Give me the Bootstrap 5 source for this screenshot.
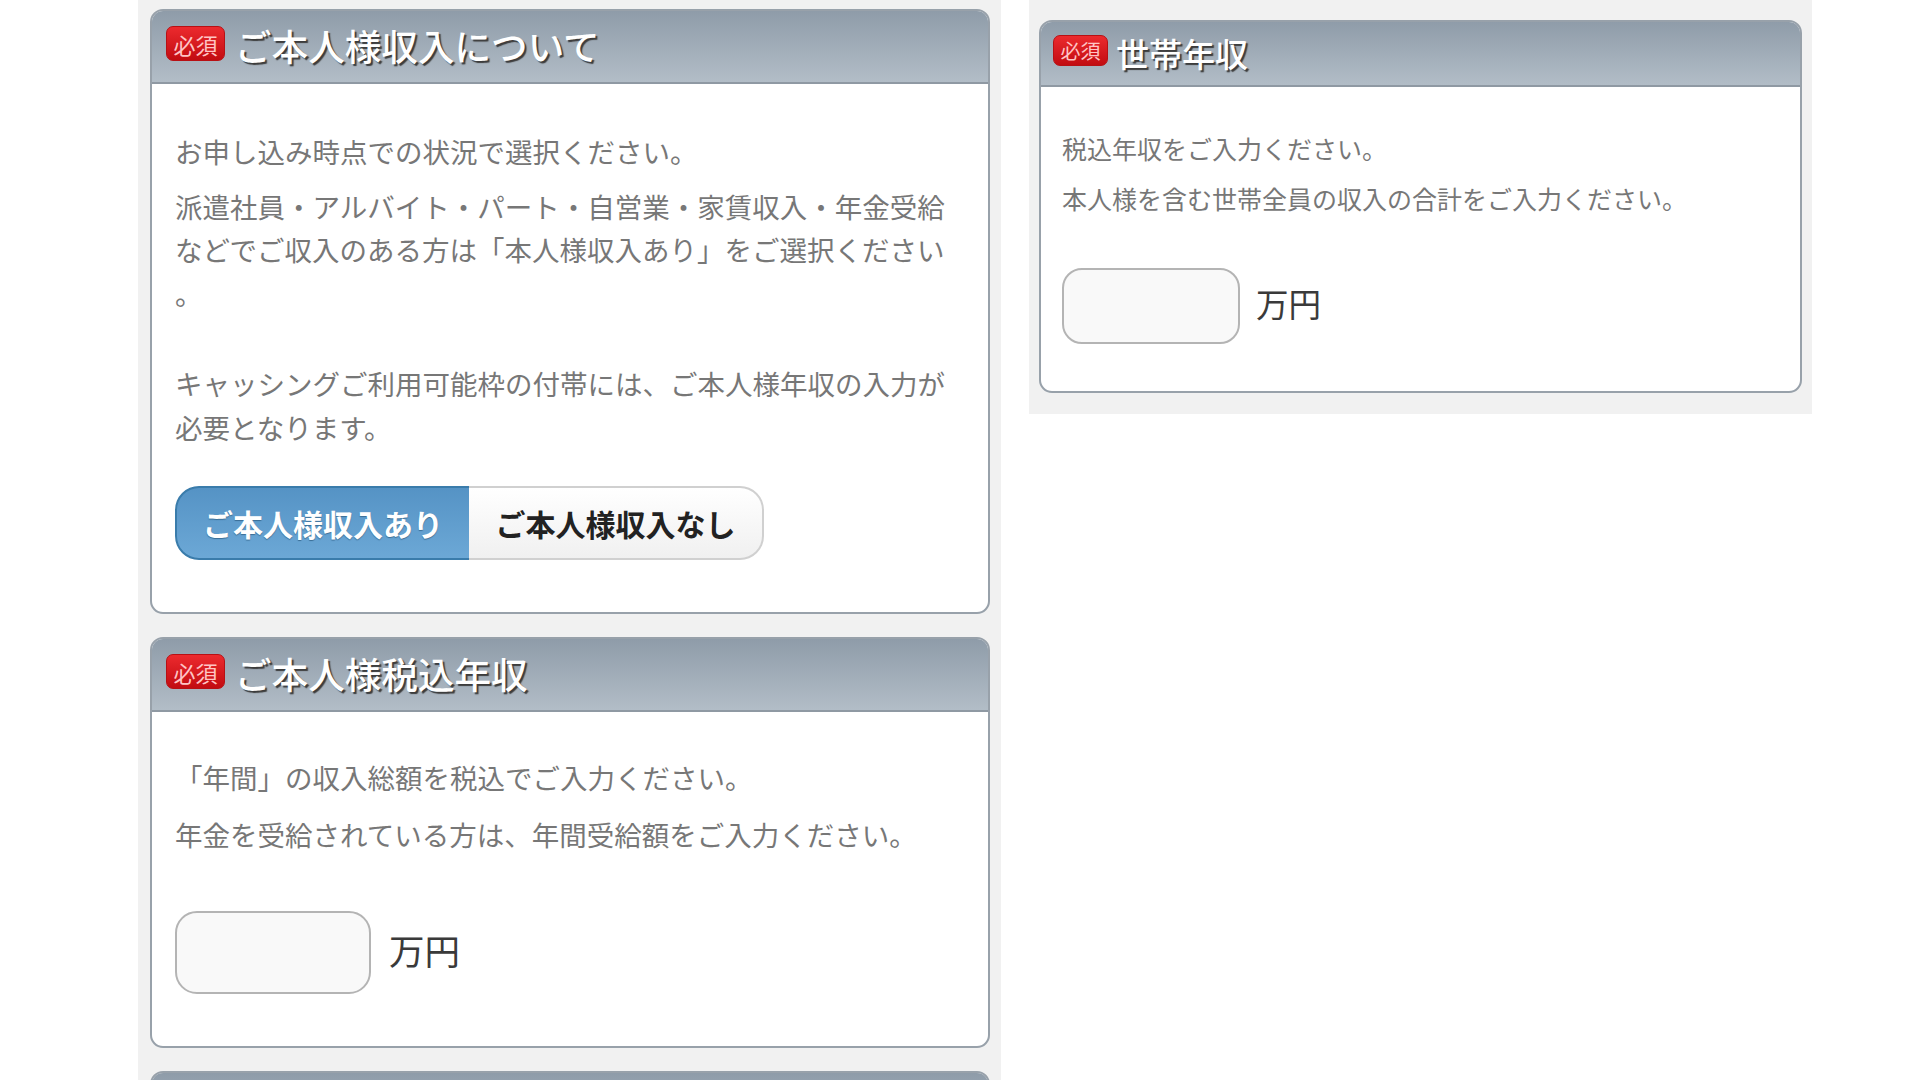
<!DOCTYPE html>
<html lang="ja">
<head>
<meta charset="utf-8">
<title>収入</title>
<link href="https://cdn.jsdelivr.net/npm/bootstrap@5.3.0/dist/css/bootstrap.min.css" rel="stylesheet">
<style>
html,body{height:1080px;overflow:hidden;background:#fff;}
body{font-family:"Noto Sans CJK JP","Liberation Sans",sans-serif;}
.stage{height:1080px;}
.pane-l{width:863px;margin-left:138px;background:#f1f1f1;padding:9px 11px 0 12px;gap:23px;height:1120px;flex:none;}
.pane-r{width:783px;margin-left:28px;background:#f1f1f1;padding:20px 10px 21px;flex:none;}
.sheet{border:2px solid #98a1aa;border-radius:13px;overflow:hidden;background:#fff;flex:none;}
.sheet .card-header{background:linear-gradient(#8f9ca9,#b2bdc7);border:0;border-bottom:2px solid #8f99a3;border-radius:0;height:73px;padding:0 0 0 14px;color:#fff;font-weight:500;text-shadow:2px 2px 1px #3c3c3c;}
.pane-l .card-header{font-size:36.6px;gap:10px;}
.pane-r .card-header{height:65px;font-size:33px;gap:8px;padding-left:12px;}
.req{width:59px;height:35px;border-radius:7px;background:linear-gradient(#ec2a2e,#c20c11);border:1px solid #b81014;color:#ffc4c4;font-family:"Noto Sans CJK JP",serif;font-size:22px;line-height:1;text-shadow:none;font-weight:400;margin-top:-6px;flex:none;}
.pane-r .req{width:55px;height:31px;font-size:20px;margin-top:-6px;}
.sheet .card-body{padding:46px 23px 52px;color:#777;font-size:27.5px;line-height:43.5px;}
.sheet .card-body.body-tight{padding-top:44px;}
.pane-r .sheet .card-body{padding:42px 21px 47px;font-size:25px;line-height:38px;}
.para{margin:0 0 13px;}
.para-tight{margin-bottom:11px;}
.pane-r .para{margin-bottom:12px;}
.gaptop{margin-top:47px;}
.seg{margin-top:37px;}
.seg .btn{width:295px;height:74px;padding:0;font-size:30px;font-weight:700;line-height:1;}
.seg .btn-on{background:linear-gradient(#5593c5,#6ca8d6);border:2px solid #3a7cab;border-right-width:1px;color:#fff;border-radius:24px 0 0 24px;text-shadow:0 1px 1px #3a6d95;}
.seg .btn-off{background:linear-gradient(#fff,#f0f0f0);border:2px solid #d0d0d0;border-left:0;color:#222;border-radius:0 24px 24px 0;}
.amt{margin-top:55px;gap:18px;color:#3a3a3a;font-size:35.5px;}
.amt span{margin-bottom:5px;}
.pane-r .amt{margin-top:51px;gap:16px;font-size:32.5px;}
.pane-r .amt span{margin-bottom:7px;}
.amt .form-control{width:196px;height:83px;background:#f9f9f9;border:2px solid #b4b4b4;border-radius:22px;flex:none;}
.pane-r .amt .form-control{width:178px;height:76px;border-radius:20px;}
</style>
</head>
<body>
<div class="stage d-flex align-items-start">
  <div class="pane-l d-flex flex-column">
    <section class="card sheet">
      <div class="card-header d-flex align-items-center"><span class="req d-flex align-items-center justify-content-center">必須</span><span>ご本人様収入について</span></div>
      <div class="card-body">
        <p class="para para-tight">お申し込み時点での状況で選択ください。</p>
        <p class="para">派遣社員・アルバイト・パート・自営業・家賃収入・年金受給<br>などでご収入のある方は「本人様収入あり」をご選択ください<br>。</p>
        <p class="para gaptop">キャッシングご利用可能枠の付帯には、ご本人様年収の入力が<br>必要となります。</p>
        <div class="btn-group d-flex seg">
          <button type="button" class="btn btn-on flex-grow-0">ご本人様収入あり</button>
          <button type="button" class="btn btn-off flex-grow-0">ご本人様収入なし</button>
        </div>
      </div>
    </section>
    <section class="card sheet">
      <div class="card-header d-flex align-items-center"><span class="req d-flex align-items-center justify-content-center">必須</span><span>ご本人様税込年収</span></div>
      <div class="card-body body-tight">
        <p class="para">「年間」の収入総額を税込でご入力ください。</p>
        <p class="para">年金を受給されている方は、年間受給額をご入力ください。</p>
        <div class="d-flex align-items-center amt"><input type="text" class="form-control" aria-label="ご本人様税込年収"><span>万円</span></div>
      </div>
    </section>
    <section class="card sheet">
      <div class="card-header"></div>
    </section>
  </div>
  <div class="pane-r">
    <section class="card sheet">
      <div class="card-header d-flex align-items-center"><span class="req d-flex align-items-center justify-content-center">必須</span><span>世帯年収</span></div>
      <div class="card-body">
        <p class="para">税込年収をご入力ください。</p>
        <p class="para">本人様を含む世帯全員の収入の合計をご入力ください。</p>
        <div class="d-flex align-items-center amt"><input type="text" class="form-control" aria-label="世帯年収"><span>万円</span></div>
      </div>
    </section>
  </div>
</div>
<script src="https://cdn.jsdelivr.net/npm/bootstrap@5.3.0/dist/js/bootstrap.bundle.min.js"></script>
</body>
</html>
